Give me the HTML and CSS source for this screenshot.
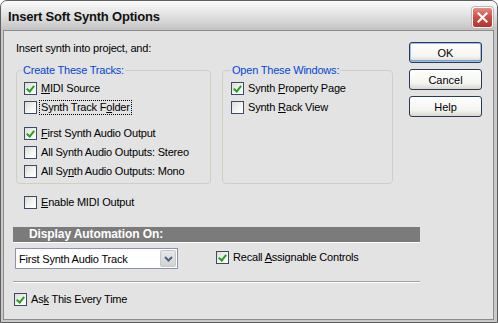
FILE: index.html
```html
<!DOCTYPE html>
<html>
<head>
  <meta charset="utf-8" />
  <title>Insert Soft Synth Options</title>
  <link rel="stylesheet" href="styles.css">
</head>
<body>

<div class='window'>
  <div class='titlebar'>
    <span class='title'>Insert Soft Synth Options</span>
    <span class='close'>
      <svg width="11" height="11" viewBox="0 0 11 11"><path d="M1.5 1.5 L9.5 9.5 M9.5 1.5 L1.5 9.5" stroke="#fff" stroke-width="2.2" stroke-linecap="square"/></svg>
    </span>
  </div>

  <div class='client'>
    <div class='top'>
      <div class='main'>
        <div class='intro'>Insert synth into project, and:</div>

        <div class='groups'>
          <fieldset class='group group-tracks'>
            <legend>Create These Tracks:</legend>
            <div class='check'><span class='box on'></span><label><u>M</u>IDI Source</label></div>
            <div class='check'><span class='box'></span><label class='focus'>Synth Track F<u>o</u>lder</label></div>
            <div class='check gap'><span class='box on'></span><label><u>F</u>irst Synth Audio Output</label></div>
            <div class='check'><span class='box'></span><label>All Synth Audio Outputs: Stereo</label></div>
            <div class='check'><span class='box'></span><label>All Sy<u>n</u>th Audio Outputs: Mono</label></div>
          </fieldset>

          <fieldset class='group group-windows'>
            <legend>Open These Windows:</legend>
            <div class='check'><span class='box on'></span><label>Synth <u>P</u>roperty Page</label></div>
            <div class='check'><span class='box'></span><label>Synth <u>R</u>ack View</label></div>
          </fieldset>
        </div>

        <div class='check enable'><span class='box'></span><label><u>E</u>nable MIDI Output</label></div>
      </div>

      <div class='buttons'>
        <button class='btn default'>OK</button>
        <button class='btn'>Cancel</button>
        <button class='btn'>Help</button>
      </div>
    </div>

    <div class='auto-bar'>Display Automation On:</div>

    <div class='auto-row'>
      <div class='select'>
        <span class='select-text'>First Synth Audio Track</span>
        <span class='select-arrow'>
          <svg width="9" height="6" viewBox="0 0 9 6"><path d="M1 1 L4.5 4.5 L8 1" fill="none" stroke="#4d6185" stroke-width="2"/></svg>
        </span>
      </div>
      <div class='check recall'><span class='box on'></span><label>Recall <u>A</u>ssignable Controls</label></div>
    </div>

    <div class='sep'></div>

    <div class='check ask'><span class='box on'></span><label>As<u>k</u> This Every Time</label></div>
  </div>
</div>

</body>
</html>
```

FILE: styles.css
```css
*{margin:0;padding:0;box-sizing:border-box;}
body{
  background:#fff;
  font-family:"Liberation Sans", Arial, sans-serif;
  font-size:11px;
  letter-spacing:-0.2px;
  color:#000;
}
.window{
  width:498px;
  height:323px;
  border:1px solid #5e5e5e;
  border-radius:7px 7px 0 0;
  background:#c9c9c9;
  display:flex;
  flex-direction:column;
  overflow:hidden;
}
.titlebar{
  flex:none;
  height:29px;
  display:flex;
  align-items:center;
  justify-content:space-between;
  padding:0 4px 0 7px;
  background:linear-gradient(to bottom, #fbfbfb 0%, #e9e9e9 35%, #d3d3d3 75%, #c2c2c2 100%);
}
.title{
  font-weight:bold;
  font-size:13px;
  letter-spacing:-0.2px;
  color:#111;
  padding-top:2px;
}
.close{
  width:21px;
  height:21px;
  margin-top:3px;
  border:1px solid #fff;
  border-radius:3px;
  background:linear-gradient(to bottom, #e58c80 0%, #cf5046 45%, #b5332c 100%);
  box-shadow:0 0 0 1px #b9b9b9;
  display:flex;
  align-items:center;
  justify-content:center;
}
.client{
  flex:1;
  margin:0 3px 2px 2px;
  border:1px solid #8c8c8c;
  background:#e3e3e3;
  padding-top:10px;
}
.top{
  display:flex;
}
.main{
  padding-left:12px;
}
.intro{
  height:14px;
  line-height:14px;
}
.groups{
  display:flex;
  gap:11px;
  margin-top:8px;
}
.group{
  height:121px;
  border:1px solid #cfcfc4;
  border-radius:4px;
}
.group legend{
  color:#0046d5;
  padding:0 1px;
  line-height:14px;
}
.group-tracks{
  width:195px;
  padding:2px 0 0 5px;
}
.group-windows{
  width:171px;
  padding:2px 0 0 8px;
}
.check{
  display:flex;
  align-items:center;
  height:19px;
}
.group-tracks .check{
  margin-left:2px;
}
.check.gap{
  margin-top:6px;
  height:20px;
}
.check label{
  margin-left:3px;
  padding:0 1px;
  line-height:13px;
  white-space:nowrap;
}
.check label.focus{
  outline:1px dotted #000;
}
.box{
  flex:none;
  width:13px;
  height:13px;
  border:1px solid #3a4b6a;
  background:linear-gradient(135deg, #dcdcd4 0%, #f6f6f3 60%, #fff 100%);
  position:relative;
}
.box.on::after{
  content:"";
  position:absolute;
  left:3px;
  top:1px;
  width:3px;
  height:6px;
  border:solid #21a121;
  border-width:0 2px 2px 0;
  transform:rotate(40deg);
}
.enable{
  margin:9px 0 0 8px;
}
.buttons{
  margin:1px 0 0 16px;
  display:flex;
  flex-direction:column;
  gap:6px;
}
.btn{
  width:73px;
  height:21px;
  font-family:inherit;
  font-size:11px;
  color:#000;
  border:1px solid #2b3b55;
  border-radius:3px;
  background:linear-gradient(to bottom, #fff 0%, #f4f4f0 70%, #d8d8d0 100%);
}
.btn.default{
  box-shadow:inset 0 0 0 1px #9fbdf0, inset 0 -1px 0 1px #7da2ce;
}
.auto-bar{
  margin:15px 0 0 9px;
  width:407px;
  height:16px;
  line-height:15px;
  padding-left:16px;
  background:#7b7b7b;
  border-bottom:1px solid #fff;
  color:#fff;
  font-weight:bold;
  font-size:12px;
  letter-spacing:-0.1px;
}
.auto-row{
  display:flex;
  align-items:center;
  margin:5px 0 0 11px;
}
.select{
  width:163px;
  height:21px;
  border:1px solid #8a95a8;
  background:#fff;
  display:flex;
  align-items:center;
  justify-content:space-between;
  padding:0 1px 0 3px;
}
.select-arrow{
  width:16px;
  height:17px;
  border:1px solid #c2c8d3;
  border-radius:2px;
  background:linear-gradient(to bottom, #e8e8e8, #d2d2d2);
  display:flex;
  align-items:center;
  justify-content:center;
}
.recall{
  margin:-3px 0 0 38px;
}
.sep{
  margin:12px 0 0 9px;
  width:407px;
  height:2px;
  border-top:1px solid #a0a0a0;
  border-bottom:1px solid #fff;
}
.ask{
  margin:7px 0 0 10px;
}
```
